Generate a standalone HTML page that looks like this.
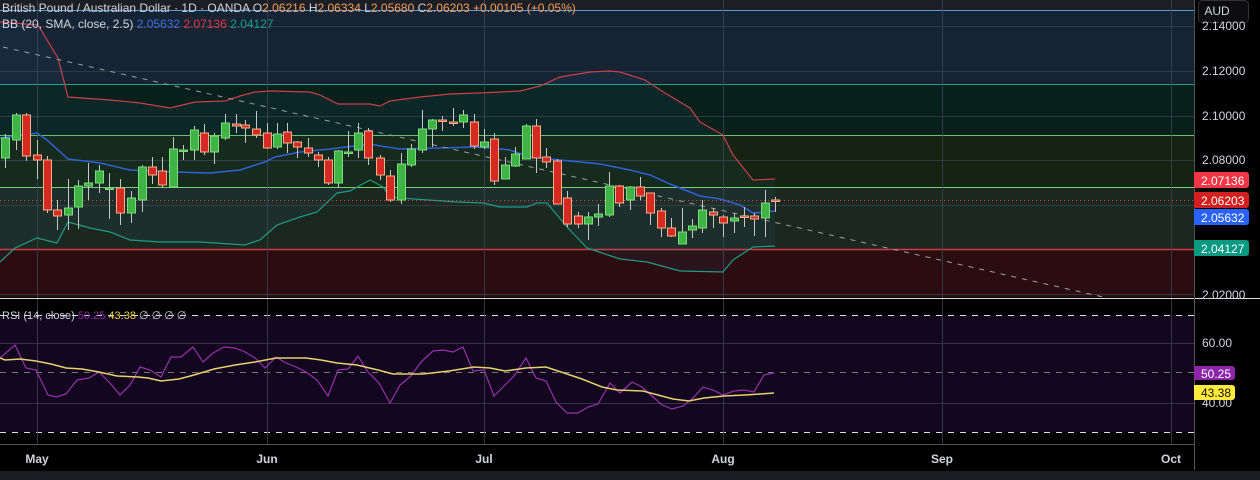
<!DOCTYPE html>
<html><head><meta charset="utf-8"><style>
html,body{margin:0;padding:0;background:#000;width:1260px;height:480px;overflow:hidden}
svg{display:block}
text{font-family:"Liberation Sans",sans-serif}
</style></head><body>
<svg id="s" width="1260" height="480" xmlns="http://www.w3.org/2000/svg">
<rect x="0" y="0" width="1260" height="480" fill="#000"/>
<!-- main pane bands -->
<rect x="0" y="0" width="1194" height="10" fill="#1b1e24"/>
<rect x="0" y="10" width="1194" height="75" fill="#152333"/>
<rect x="0" y="85" width="1194" height="50" fill="#08201c"/>
<rect x="0" y="135" width="1194" height="52" fill="#142312"/>
<rect x="0" y="187" width="1194" height="62" fill="#1b281f"/>
<rect x="0" y="249" width="1194" height="48" fill="#2b0c11"/>
<g stroke="#3a4450" stroke-width="1" opacity="0.7">
<line x1="0" y1="26.5" x2="1194" y2="26.5"/><line x1="0" y1="71.5" x2="1194" y2="71.5"/>
<line x1="0" y1="116.5" x2="1194" y2="116.5"/><line x1="0" y1="160.5" x2="1194" y2="160.5"/>
<line x1="0" y1="205.5" x2="1194" y2="205.5"/><line x1="0" y1="294.5" x2="1194" y2="294.5"/>
</g>
<line x1="0" y1="10.5" x2="1194" y2="10.5" stroke="#5b9bd5" stroke-width="1"/>
<line x1="0" y1="84.5" x2="1194" y2="84.5" stroke="#26a08a" stroke-width="1"/>
<line x1="0" y1="135.5" x2="1194" y2="135.5" stroke="#6fbf6a" stroke-width="1"/>
<line x1="0" y1="187.5" x2="1194" y2="187.5" stroke="#7fcf7a" stroke-width="1"/>
<line x1="0" y1="249.5" x2="1194" y2="249.5" stroke="#d03a48" stroke-width="1.5"/>
<!-- RSI pane -->
<rect x="0" y="315" width="1194" height="117" fill="#12071f"/>
<g stroke="#3a3050" stroke-width="1"><line x1="0" y1="343.5" x2="1194" y2="343.5"/><line x1="0" y1="403.5" x2="1194" y2="403.5"/></g>
<g stroke="#ddd" stroke-width="1" stroke-dasharray="6,6"><line x1="0" y1="315.5" x2="1194" y2="315.5"/><line x1="0" y1="432.5" x2="1194" y2="432.5"/></g>
<line x1="0" y1="372.5" x2="1194" y2="372.5" stroke="#777" stroke-width="1" stroke-dasharray="6,6"/>
<!-- vertical grid -->
<g stroke="#3c4450" stroke-width="1" opacity="0.8">
<line x1="37.5" y1="0" x2="37.5" y2="444"/><line x1="267.5" y1="0" x2="267.5" y2="444"/><line x1="484.5" y1="0" x2="484.5" y2="444"/>
<line x1="723.5" y1="0" x2="723.5" y2="444"/><line x1="942.5" y1="0" x2="942.5" y2="444"/><line x1="1171.5" y1="0" x2="1171.5" y2="444"/>
</g>
<g id="bb"></g>
<line x1="3" y1="47" x2="1103" y2="297" stroke="#9aa0a8" stroke-width="1" stroke-dasharray="5,6"/>
<line x1="0" y1="200.5" x2="1194" y2="200.5" stroke="#e04040" stroke-width="1" stroke-dasharray="1,3"/>
<g id="cd"></g>
<g id="rsi"></g>
<!-- separators -->
<line x1="0" y1="298.5" x2="1260" y2="298.5" stroke="#e0e0e0" stroke-width="1"/>
<line x1="0" y1="444.5" x2="1194" y2="444.5" stroke="#555" stroke-width="1"/>
<line x1="1194.5" y1="0" x2="1194.5" y2="470" stroke="#555" stroke-width="1"/>
<rect x="0" y="471" width="1260" height="9" fill="#1c1d22"/>
<!-- header -->
<text x="2" y="12" font-size="12" fill="#d1d4dc">British Pound / Australian Dollar · 1D · OANDA  <tspan fill="#d1d4dc">O</tspan><tspan fill="#f0a060">2.06216</tspan>  H<tspan fill="#f0a060">2.06334</tspan>  L<tspan fill="#f0a060">2.05680</tspan>  C<tspan fill="#f0a060">2.06203</tspan> <tspan fill="#f0a060">+0.00105 (+0.05%)</tspan></text>
<text x="2" y="28" font-size="12" fill="#d1d4dc">BB (20, SMA, close, 2.5)  <tspan fill="#3f6fe0">2.05632</tspan>  <tspan fill="#e0394a">2.07136</tspan>  <tspan fill="#13a085">2.04127</tspan></text>
<text x="2" y="319" font-size="11" fill="#d1d4dc">RSI (14, close)  <tspan fill="#8a2aa0">50.25</tspan>  <tspan fill="#f0d040">43.38</tspan>  <tspan fill="#d1d4dc">∅ ∅ ∅ ∅</tspan></text>
<!-- axis -->
<rect x="1198.5" y="0.5" width="50" height="22" rx="4" fill="#0c0c0e" stroke="#333"/>
<text x="1217" y="15" font-size="12" fill="#d1d4dc" text-anchor="middle">AUD</text>
<g font-size="12" fill="#d1d4dc">
<text x="1202" y="30">2.14000</text><text x="1202" y="75">2.12000</text><text x="1202" y="120">2.10000</text>
<text x="1202" y="164">2.08000</text><text x="1202" y="299">2.02000</text>
<text x="1202" y="347">60.00</text><text x="1202" y="407">40.00</text>
</g>
<g font-size="12" fill="#fff">
<path d="M1194 172h52a3 3 0 0 1 3 3v10a3 3 0 0 1-3 3h-52z" fill="#f23645"/><text x="1201" y="185">2.07136</text>
<path d="M1194 192h52a3 3 0 0 1 3 3v10a3 3 0 0 1-3 3h-52z" fill="#d41f1f"/><text x="1201" y="205">2.06203</text>
<path d="M1194 209h52a3 3 0 0 1 3 3v10a3 3 0 0 1-3 3h-52z" fill="#2962ff"/><text x="1201" y="222">2.05632</text>
<path d="M1194 240h52a3 3 0 0 1 3 3v10a3 3 0 0 1-3 3h-52z" fill="#089981"/><text x="1201" y="253">2.04127</text>
<path d="M1194 366h38a3 3 0 0 1 3 3v8a3 3 0 0 1-3 3h-38z" fill="#8e24aa"/><text x="1201" y="378">50.25</text>
<path d="M1194 385h38a3 3 0 0 1 3 3v9a3 3 0 0 1-3 3h-38z" fill="#ffeb3b"/><text x="1201" y="397" fill="#111">43.38</text>
</g>
<g font-size="12" fill="#d1d4dc" text-anchor="middle" font-weight="bold">
<text x="37" y="463">May</text><text x="267" y="463">Jun</text><text x="484" y="463">Jul</text>
<text x="723" y="463">Aug</text><text x="942" y="463">Sep</text><text x="1171" y="463">Oct</text>
</g>
</svg>
<script>
var NS="http://www.w3.org/2000/svg";
function el(p,t,a){var e=document.createElementNS(NS,t);for(var k in a)e.setAttribute(k,a[k]);p.appendChild(e);return e;}
function pts(a){return a.map(function(p){return p[0]+","+p[1]}).join(" ");}
var up=[[0,22],[38,25],[58,58],[68,97],[110,100],[140,103],[170,108],[195,102],[225,101],[240,96],[255,92],[270,91],[310,92],[320,95],[338,104],[370,104],[380,106],[390,101],[420,97],[450,94],[480,93],[500,92],[520,91],[540,86],[560,77],[590,72],[610,71],[620,72],[645,80],[665,93],[690,108],[700,122],[723,135],[733,155],[753,180],[775,179]];
var mid=[[0,138],[37,133],[47,140],[68,159],[100,163],[130,170],[175,172],[210,173],[240,170],[265,162],[275,157],[300,152],[330,149],[370,144],[380,146],[400,149],[440,148],[475,147],[490,148],[510,150],[530,157],[560,160],[600,164],[630,170],[650,175],[670,184],[700,196],[720,199],[740,205],[753,213],[775,211]];
var lo=[[0,262],[15,248],[37,238],[57,243],[68,222],[90,228],[110,232],[130,240],[160,242],[200,242],[245,245],[260,240],[277,225],[300,217],[317,212],[337,193],[350,191],[370,180],[383,187],[390,197],[400,198],[457,202],[483,203],[500,207],[527,207],[537,203],[547,203],[567,227],[587,248],[620,259],[647,262],[680,271],[723,272],[733,260],[753,247],[775,246]];
var bb=document.getElementById("bb");
el(bb,"polygon",{points:pts(up.concat(lo.slice().reverse())),fill:"rgba(60,140,200,0.07)"});
el(bb,"polyline",{points:pts(up),fill:"none",stroke:"#c8404a","stroke-width":1.2});
el(bb,"polyline",{points:pts(mid),fill:"none",stroke:"#2f62d8","stroke-width":1.5});
el(bb,"polyline",{points:pts(lo),fill:"none",stroke:"#1f9a86","stroke-width":1.2});
// x, open, close, high, low (pixel y)
var C=[[5,158,138,134,168],[16,140,115,113,150],[26,115,156,113,161],[37,155,160,140,179],[47,160,210,156,213],[57,210,216,200,230],[68,215,208,179,230],[78,207,186,180,229],[88,186,183,163,200],[99,183,171,165,193],[109,189,188,173,219],[120,188,213,179,225],[131,213,198,191,223],[142,200,167,165,212],[152,167,175,157,184],[162,171,185,157,188],[173,187,149,137,188],[183,151,150,145,160],[194,150,130,126,160],[204,133,152,124,155],[214,152,136,133,164],[225,138,123,114,140],[236,124,126,114,133],[245,125,128,120,143],[256,129,135,111,138],[267,133,148,123,149],[277,147,134,123,149],[287,132,143,123,153],[297,142,147,141,158],[308,148,153,138,157],[318,155,160,152,167],[328,160,183,157,185],[338,183,151,150,188],[348,153,152,131,157],[358,150,133,123,158],[368,131,158,128,165],[380,158,175,155,180],[390,176,200,170,202],[401,200,164,153,204],[411,165,149,144,167],[422,150,129,110,153],[432,129,120,119,147],[442,120,121,116,131],[453,122,123,108,126],[463,122,115,110,128],[474,122,146,114,149],[484,147,142,129,149],[494,139,181,133,185],[505,179,165,157,179],[515,166,154,147,167],[526,159,126,124,159],[536,126,158,119,173],[546,157,162,148,168],[557,161,204,159,204],[567,198,224,191,227],[578,216,224,212,228],[588,224,217,212,240],[598,217,214,204,226],[609,215,186,172,217],[619,186,203,185,207],[630,200,187,186,210],[640,187,196,177,200],[650,193,213,193,225],[661,211,228,208,237],[671,228,236,218,237],[682,244,232,208,244],[692,230,226,219,238],[702,228,210,200,233],[713,212,215,208,228],[723,217,223,215,237],[734,221,218,213,233],[744,216,216.5,207,227],[754,216,219,213,236],[765,218,203,190,237],[775,200,200.5,197,212]];
var cd=document.getElementById("cd");
C.forEach(function(c){var x=c[0],o=c[1],cl=c[2],g=cl<o;
var fill=g?"#3fb345":"#d42a22",st=g?"#7ddc7c":"#f5b08a";
el(cd,"line",{x1:x+0.5,y1:c[3],x2:x+0.5,y2:c[4],stroke:"#c8c8c8","stroke-width":1});
var t=Math.min(o,cl),h=Math.max(Math.abs(o-cl),1.5);
el(cd,"rect",{x:x-3.5,y:t,width:8,height:h,fill:fill,stroke:st,"stroke-width":1});});
var P=[[0,358],[15,345],[26,368],[36,370],[48,395],[56,397],[66,394],[77,380],[89,378],[99,372],[110,383],[120,395],[130,385],[140,367],[150,370],[161,377],[171,357],[181,357],[193,347],[203,362],[213,353],[224,347],[235,348],[245,352],[255,358],[265,368],[276,357],[286,363],[296,367],[306,372],[317,380],[328,396],[338,370],[348,369],[358,356],[368,372],[379,383],[390,403],[400,385],[411,376],[421,362],[433,351],[443,350],[453,352],[463,347],[473,371],[484,370],[494,396],[504,386],[514,376],[526,358],[536,378],[546,381],[556,402],[567,413],[578,413],[588,407],[598,404],[610,383],[620,393],[632,382],[642,387],[652,396],[662,405],[672,409],[683,406],[693,398],[703,387],[713,390],[723,395],[734,391],[744,390],[754,392],[764,375],[774,373]];
var Y=[[0,358],[5,360],[20,359],[36,361],[51,364],[66,368],[82,369],[99,372],[117,376],[138,377],[148,378],[161,381],[179,379],[194,375],[214,369],[235,365],[255,362],[276,358],[306,358],[321,360],[337,363],[357,365],[378,370],[393,374],[423,374],[449,371],[474,367],[490,368],[505,371],[526,368],[546,367],[561,372],[582,379],[602,387],[617,390],[643,391],[658,395],[673,399],[689,401],[704,398],[724,396],[745,395],[760,394],[774,393]];
var r=document.getElementById("rsi");
el(r,"polyline",{points:pts(P),fill:"none",stroke:"#9a2fb0","stroke-width":1.2});
el(r,"polyline",{points:pts(Y),fill:"none",stroke:"#e8d070","stroke-width":1.5});
</script>
</body></html>
